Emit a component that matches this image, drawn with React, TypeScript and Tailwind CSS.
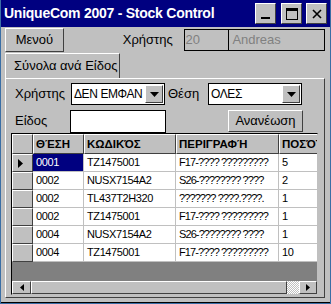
import React from "react";

const raised = "border border-t-white border-l-white border-r-[#404040] border-b-[#404040]";

function Arrow() {
  return (
    <svg width="9" height="5" viewBox="0 0 9 5"><path d="M0 0h9L4.5 5z" fill="#000" /></svg>
  );
}

function Combo({ value, w }: { value: string; w: string }) {
  return (
    <div className={`flex h-[22px] ${w} border border-[#000] bg-white p-[1px]`}>
      <div className="flex-1 overflow-hidden whitespace-nowrap pl-[1px] leading-[18px] text-[12px] tracking-[-0.4px] text-black">{value}</div>
      <div className={`flex w-[18px] items-center justify-center bg-[#c0c0c0] ${raised}`}>
        <Arrow />
      </div>
    </div>
  );
}

const rows = [
  ["0001", "TZ1475001", "F17-???? ?????????", "5"],
  ["0002", "NUSX7154A2", "S26-???????? ????", "2"],
  ["0002", "TL437T2H320", "??????? ????.????.", "1"],
  ["0002", "TZ1475001", "F17-???? ?????????", "1"],
  ["0004", "NUSX7154A2", "S26-???????? ????", "1"],
  ["0004", "TZ1475001", "F17-???? ?????????", "10"],
];

const cell = "overflow-hidden whitespace-nowrap border-b border-r border-[#c0c0c0] bg-white pl-[3px] leading-[17px]";

export default function App() {
  return (
    <div
      className="flex h-[304px] w-[331px] flex-col bg-[#3a6ea5] px-[1px] pb-[1px]"
      style={{ fontFamily: '"Liberation Sans", Arial, sans-serif' }}
    >
      {/* title bar */}
      <div className="flex h-[27px] shrink-0 items-center bg-[#000080] pl-[3px] pr-[3px]">
        <div className="flex-1 text-[14px] font-bold tracking-[-0.25px] text-white">UniqueCom 2007 - Stock Control</div>
        <div className="flex gap-[3px]">
          <div className={`flex h-[21px] w-[21px] items-end justify-center bg-[#c0c0c0] pb-[4px] ${raised}`}>
            <div className="h-[2px] w-[9px] bg-black" />
          </div>
          <div className={`ml-[2px] flex h-[21px] w-[21px] items-center justify-center bg-[#c0c0c0] ${raised}`}>
            <div className="h-[12px] w-[12px] border border-t-[3px] border-black" />
          </div>
          <div className={`ml-[1px] flex h-[21px] w-[21px] items-center justify-center bg-[#c0c0c0] ${raised}`}>
            <svg width="10" height="10" viewBox="0 0 10 10"><path d="M1 1L9 9M9 1L1 9" stroke="#000" strokeWidth="1.6" /></svg>
          </div>
        </div>
      </div>
      {/* body */}
      <div className="flex flex-1 flex-col border-b border-b-black bg-[#c0c0c0] pl-[4px] pr-[5px]">
        <div className="mt-[1px] flex h-[24px] items-center">
          <div className={`flex h-[24px] w-[59px] items-center justify-center bg-[#c0c0c0] text-[13px] text-black ${raised}`}>Μενού</div>
          <div className="ml-[59px] w-[61px] text-[13px] text-black">Χρήστης</div>
          <div className="flex h-[22px] w-[46px] items-center border border-black pl-[1px] text-[13px] text-[#808080]">20</div>
          <div className="flex h-[22px] w-[96px] items-center border border-l-0 border-black pl-[3px] text-[13px] text-[#808080]">Andreas</div>
        </div>
        {/* tab */}
        <div className="mt-[1px] flex flex-1 flex-col">
          <div className="flex h-[25px] w-[115px] items-center border border-b-0 border-t-white border-l-white border-r-[#404040] pl-[8px] text-[13px] text-black">Σύνολα ανά Είδος</div>
          <div className="mb-[4px] flex flex-1 flex-col border border-t-white border-l-white border-r-[#404040] border-b-[#404040] pb-[2px] pl-[9px] pr-[4px]">
            <div className="mt-[4px] flex h-[22px] items-center">
              <div className="w-[56px] text-[13px] text-black">Χρήστης</div>
              <Combo value="ΔΕΝ ΕΜΦΑΝ" w="w-[94px]" />
              <div className="ml-[3px] w-[40px] text-[13px] text-black">Θέση</div>
              <Combo value="ΟΛΕΣ" w="w-[94px]" />
            </div>
            <div className="mt-[5px] flex h-[22px] items-center">
              <div className="w-[55px] text-[13px] text-black">Είδος</div>
              <div className="h-[23px] w-[96px] border border-black bg-white" />
              <div className={`ml-[62px] flex h-[22px] w-[75px] items-center justify-center text-[13px] text-black ${raised}`}>Ανανέωση</div>
            </div>
            {/* grid */}
            <div className="-ml-[4px] mr-[2px] mt-[1px] flex flex-1 flex-col border border-t-black border-l-black border-r-[#c0c0c0] border-b-[#c0c0c0] bg-[#808080]">
              <div className="flex flex-1 flex-col overflow-hidden">
                <div className="flex h-[20px] bg-[#c0c0c0] text-[11.5px] font-bold text-black">
                  <div className={`w-[21px] ${raised}`} />
                  <div className={`w-[51px] overflow-hidden whitespace-nowrap pl-[2px] leading-[18px] ${raised}`}>ΘΈΣΗ</div>
                  <div className={`w-[92px] overflow-hidden whitespace-nowrap pl-[2px] leading-[18px] ${raised}`}>ΚΩΔΙΚΌΣ</div>
                  <div className={`w-[103px] overflow-hidden whitespace-nowrap pl-[2px] leading-[18px] ${raised}`}>ΠΕΡΙΓΡΑΦΉ</div>
                  <div className={`flex-1 overflow-hidden whitespace-nowrap pl-[2px] leading-[18px] ${raised} border-r-0`}>ΠΟΣΌΤΗΤΑ</div>
                </div>
                {rows.map((r, i) => (
                  <div key={i} className="flex h-[18px] text-[11px] tracking-[-0.4px] text-black">
                    <div className={`flex w-[21px] items-center pl-[5px] bg-[#c0c0c0] ${raised}`}>
                      {i === 0 && <svg width="5" height="9" viewBox="0 0 5 9"><path d="M0 0L5 4.5L0 9z" fill="#000" /></svg>}
                    </div>
                    <div className={`w-[51px] ${cell} ${i === 0 ? "!bg-[#000080] text-white" : ""}`}>{r[0]}</div>
                    <div className={`w-[92px] ${cell}`}>{r[1]}</div>
                    <div className={`w-[103px] ${cell} tracking-[-0.9px]`}>{r[2]}</div>
                    <div className={`flex-1 ${cell} border-r-0`}>{r[3]}</div>
                  </div>
                ))}
              </div>
              {/* scrollbar */}
              <div className="flex h-[13px] bg-[#c0c0c0]">
                <div className={`flex w-[19px] items-center justify-center ${raised}`}>
                  <svg width="4" height="7" viewBox="0 0 4 7"><path d="M4 0L0 3.5L4 7z" fill="#000" /></svg>
                </div>
                <div className={`flex-1 border-l border-l-black ${raised}`} />
                <div
                  className="w-[12px]"
                  style={{ backgroundImage: "repeating-conic-gradient(#c0c0c0 0 25%, #ffffff 0 50%)", backgroundSize: "2px 2px" }}
                />
                <div className={`flex w-[18px] items-center justify-center ${raised}`}>
                  <svg width="4" height="7" viewBox="0 0 4 7"><path d="M0 0L4 3.5L0 7z" fill="#000" /></svg>
                </div>
              </div>
            </div>
          </div>
        </div>
      </div>
    </div>
  );
}
